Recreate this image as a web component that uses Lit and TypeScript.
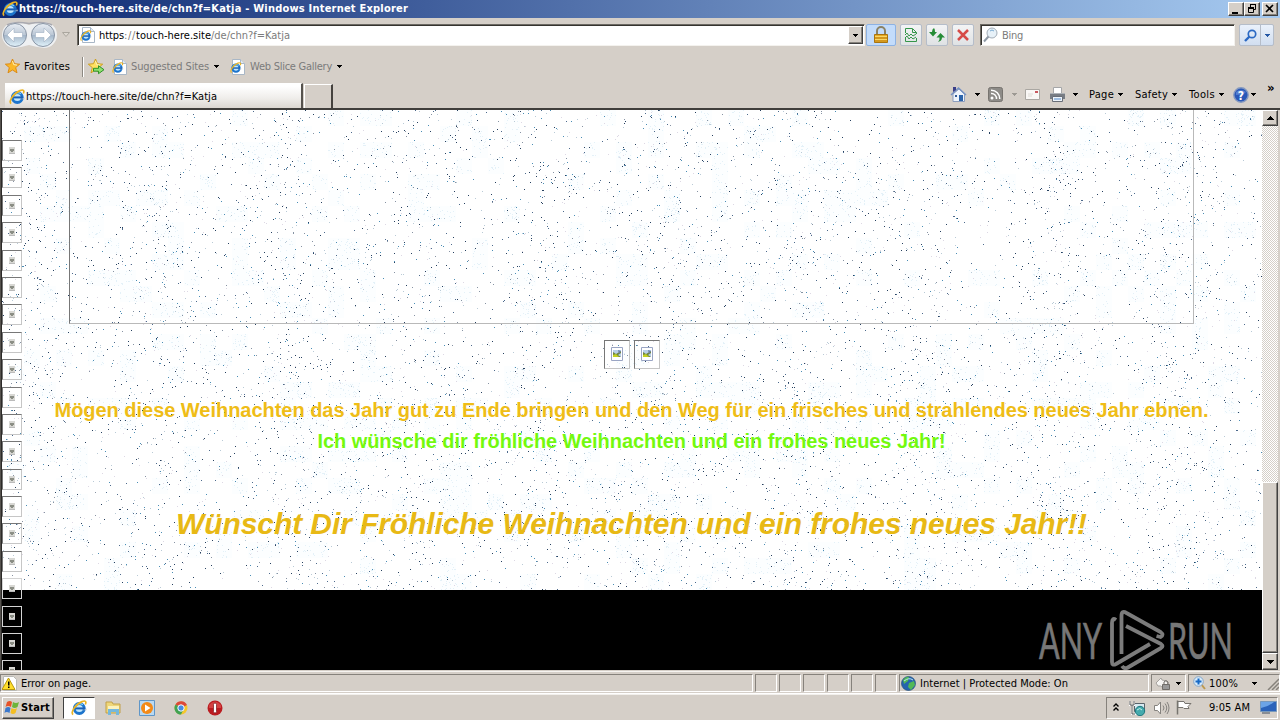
import { LitElement, html, svg, css } from "lit";
import { customElement, property } from "lit/decorators.js";

const caret = html`<svg class="caret" width="5" height="3" viewBox="0 0 5 3"><path d="M0 0h5v1H4v1H3v1H2V2H1V1H0z" fill="currentColor"/></svg>`;

const eShape = svg`
  <circle cx="8.3" cy="8.5" r="5" fill="#bfe6fb" stroke="#1c74cc" stroke-width="2.9"/>
  <path d="M10 10.2h6v-1.6" fill="#d6d2cb" opacity=".6"/>
  <path d="M4.2 8.4h9.6" stroke="#1b5fb4" stroke-width="2"/>
  <path d="M4 6.600C5 3.500 9 2.800 12 4.700" stroke="#7fd0fa" stroke-width="1.300" fill="none"/>
  <path d="M2.2 14.6C-1 13 4 4.6 11 1.6c3.600-1.500 4.600.2 3.300 2.900" fill="none" stroke="#e9b324" stroke-width="1.700"/>`;
const ieIcon = html`<svg width="16" height="16" viewBox="0 0 16 16">${eShape}</svg>`;
const iePage = html`<svg width="15" height="16" viewBox="0 0 15 16">
  <path d="M2.500.5h8l4 4v11h-12z" fill="#fff" stroke="#a9b7c6"/><path d="M10.500.5v4h4" fill="#dfe9f3" stroke="#a9b7c6"/>
  <g transform="translate(0 3) scale(.72)">${eShape}</g></svg>`;
const star = (add: boolean) => html`<svg width="17" height="17" viewBox="0 0 17 17">
  <path d="M7.500 1l2 4.700 5.200.5-4 3.400 1.300 5.200-4.500-2.800L3 14.800l1.300-5.200-4-3.400 5.200-.5z" fill="${add ? "#ffe162" : "#fbb829"}" stroke="${add ? "#c99b16" : "#d9860f"}" stroke-width=".9"/>
  <path d="M7.500 3l1.200 3.600 3.300.5" fill="none" stroke="#fff2b8"/>
  ${add ? svg`<path d="M5.500 10.300h5V7.700l5.500 4-5.500 4v-2.500h-5z" fill="#8fe070" stroke="#218a1e" stroke-width=".9"/>` : ""}</svg>`;
const brokenSmall = html`<svg width="6" height="7" viewBox="0 0 6 7"><path d="M0 0h6v7H0z" fill="#d8d8d4"/><path d="M1 2h4v2H4v1H2V4H1z" fill="#8b8e85"/><path d="M0 6h6v1H0z" fill="#bbb"/></svg>`;
const brokenBig = html`<svg width="12" height="14" viewBox="0 0 12 14"><path d="M.5.5h11v13H.5z" fill="#fff" stroke="#9aa5c4"/><path d="M2 3h8v7H2z" fill="#b8cfe8"/><path d="M2 5l3 2 5-3v2L7 8l3 2H2z" fill="#6f8440"/><path d="M2 8l3-1 3 3H2z" fill="#c3cf20"/><path d="M7 3l3 1-2 3z" fill="#6d7fa5"/></svg>`;

/** One line of interface text, tracked out to a given width. */
@customElement("ui-text")
export class UiText extends LitElement {
  static styles = css`:host{display:block;white-space:pre;line-height:1.2} span{display:inline-block}`;
  @property({ type: Number }) fit = 0;
  @property() text = "";
  render() { return html`<span>${this.text}</span>`; }
  updated() {
    const s = this.renderRoot.querySelector("span")!;
    s.style.letterSpacing = "0px";
    const w = s.getBoundingClientRect().width;
    if (this.fit && w) s.style.letterSpacing = `${(this.fit - w) / this.text.length}px`;
  }
}
const t = (text: string, fit: number, cls = "") => html`<ui-text class=${cls} .text=${text} .fit=${fit}></ui-text>`;

/** Falling snow specks over the page background. */
@customElement("snow-field")
export class SnowField extends LitElement {
  static styles = css`:host{display:block} svg{display:block}`;
  render() {
    let seed = 90211;
    const rnd = () => ((seed = (seed * 1664525 + 1013904223) >>> 0) / 4294967296);
    const inks = ["#26405f", "#4d6a8c", "#8793a3", "#4a8db5", "#b9cad6", "#ddd8e4"];
    const share = [0.2, 0.38, 0.52, 0.66, 0.84, 1];
    const paths = inks.map(() => "");
    for (let i = 0; i < 17500; i++) {
      const x = Math.floor(rnd() * 1260), y = Math.floor(rnd() * 480), r = rnd();
      const keep = 0.54 + 0.18 * Math.sin(x / 20.2) + 0.1 * Math.sin(y / 13 + x / 39);
      if (rnd() > keep) continue;
      paths[share.findIndex((v) => r <= v)] += `M${x} ${y}h1v1h-1z`;
    }
    let haze = "", mist = "";
    for (let i = 0; i < 620; i++) {
      const bx = Math.floor(rnd() * 78) * 16 + 6, by = Math.floor(rnd() * 30) * 16;
      haze += `M${bx} ${by}h16v16h-16z`;
      for (let k = 0; k < 12; k++) mist += `M${bx + Math.floor(rnd() * 16)} ${by + Math.floor(rnd() * 16)}h1v1h-1z`;
    }
    return html`<svg width="1260" height="480" shape-rendering="crispEdges"><path d=${haze} fill="#fcfeff"/><path d=${mist} fill="#e4f1f8"/>${paths.map((d, i) => svg`<path d=${d} fill=${inks[i]}/>`)}</svg>`;
  }
}

@customElement("app-root")
export class AppRoot extends LitElement {
  static styles = css`
    :host{display:block;width:1280px;height:720px;overflow:hidden;background:#d5cfc8;color:#000;font:11px "DejaVu Sans Condensed","DejaVu Sans",sans-serif}
    *{box-sizing:border-box}
    svg{display:block;flex:none}
    .win{display:grid;grid-template-rows:18px 35px 27px 28px 562px 24px 26px;height:720px}
    .title{display:flex;align-items:center;padding:0 2px 0 2px;background:linear-gradient(90deg,#0d2872,#a6caf0);color:#fff;font-weight:bold}
    .title ui-text{margin-left:1px;flex:1}
    .wb{width:16px;height:14px;background:#d5cfc8;border:1px solid;border-color:#fff #404040 #404040 #fff;box-shadow:inset -1px -1px #86827c}
    .wb.close{margin-left:2px}
    .nav{display:grid;grid-template-columns:60px 15px 789px 34px 26px 26px 28px 259px 35px;align-items:center;padding:0 0 1px 2px}
    .field{display:flex;align-items:center;background:#fff;height:22px;border:1px solid;border-color:#6c6963 #f4f2ee #f4f2ee #6c6963;box-shadow:inset 1px 1px #36342f;padding:0 1px 0 2px}
    .field ui-text{padding-top:1px}
    .addr{width:788px}.addr .url{display:flex;flex:1;margin-left:4px}
    .grey{color:#7b7b7b}
    .dd{width:15px;height:18px;background:#d5cfc8;border:1px solid;border-color:#fff #404040 #404040 #fff;box-shadow:inset -1px -1px #86827c;display:grid;place-items:center}
    .search{width:255px}.search ui-text{margin-left:4px}
    .btn{width:22px;height:22px;border:1px solid #b5bdc9;border-radius:2px;background:linear-gradient(#f3f4f5,#dfe2e4);display:grid;place-items:center}
    .btn.lock{width:30px;background:#c3dcfb;border-color:#8db2e3}
    .btn.go{width:35px;grid-template-columns:20px 13px;background:linear-gradient(#eaf1fb,#d1def0)}
    .btn.go .caret{color:#2457a5}
    .btn.go .half{border-left:1px solid #b5bdc9;height:20px;width:13px;display:grid;place-items:center}
    .favs{display:grid;grid-template-columns:19px 58px 6px 24px 19px 83px 16px 20px 87px 10px;align-items:center;padding-left:5px}
    .sep{width:2px;height:20px;background:#8c8881;border-right:1px solid #fff}
    .tabs{display:grid;grid-template-columns:298px 30px 1fr;padding:3px 0 0 5px}
    .tab{display:flex;align-items:center;gap:1px;padding:1px 0 0 4px;background:linear-gradient(#fff 10%,#efedea 60%,#dcd7d1);border-right:2px solid #55524d;border-top:1px solid #fff}
    .newtab{margin:1px 0 0 1px;border:1px solid #fff;border-right:2px solid #45423e;border-bottom:0}
    .cmds{display:grid;grid-template-columns:25px 13px 24px 13px 24px 24px 16px 29px 17px 37px 17px 30px 14px 18px 16px 13px;justify-content:end;align-items:center;height:22px;padding-top:1px}
    .dim{color:#9c9993}
    .more{font-size:13px;line-height:8px;font-weight:bold;align-self:start}
    .view{display:grid;grid-template-columns:1260px 16px;padding-left:2px;background:linear-gradient(90deg,#55524e 1px,#2c2a28 1px,#2c2a28 2px,#d5cfc8 2px);border-top:2px solid #403e3b;height:562px}
    .page{position:relative;height:560px;background:#000;overflow:hidden;font-family:"Liberation Sans",Arial,sans-serif;font-weight:bold}
    .snow{position:absolute;left:0;top:0;background:#fff}
    .body{position:relative;height:480px;display:flex;flex-direction:column;align-items:center;padding-right:1px}
    .frame{width:1125px;height:214px;border:solid #b9b9b9;border-width:0 1px 1px;border-left-color:#777;flex:none}
    .pics{display:flex;gap:4px;margin:16px 0 0 1px}
    .pic{width:26px;height:29px;border:1px solid;border-color:#777 #c5c5c5 #c5c5c5 #777;display:grid;place-items:center;padding-bottom:1px}
    .wish{font-size:20px;line-height:24px;color:#efbd17;height:24px}
    .w1{margin-top:29px}.w2{margin-top:7px;color:#73f90f}.w3{margin-top:53px;font-size:30px;line-height:36px;font-style:italic;color:#e8b915}
    .trail{position:absolute;left:0;top:30px;display:grid;grid-auto-rows:27.400px}
    .flake{width:20px;height:21px;border:1px solid;border-color:#777 #c6c6c6 #c6c6c6 #777;display:grid;place-items:center}
    .flake.dark{border-color:#d4d4d4}
    .mark{position:absolute;left:1030px;top:498px}
    .bar{display:grid;grid-template-rows:16px 356px 171px 17px;background:repeating-conic-gradient(#fff 0 25%,#d5cfc8 0 50%) 0 0/2px 2px}
    .sb{background:#d5cfc8;border:1px solid;border-color:#fff #404040 #404040 #fff;box-shadow:inset -1px -1px #86827c;display:grid;place-items:center}
    .status{display:grid;grid-template-columns:753px repeat(6,22px) 250px 35px 92px;column-gap:2px;padding-top:3px;border-top:1px solid #d5cfc8;border-bottom:1px solid #fff;box-shadow:inset 0 1px #f6f4f1}
    .pane{height:18px;border:1px solid;border-color:#86827c #fff #fff #86827c;display:flex;align-items:center}
    .pane ui-text{padding-top:1px}
    .pane.first{padding-left:1px;gap:4px}
    .pane.zone{gap:4px;padding-left:1px}
    .pane.prot{padding-left:3px;gap:5px}
    .pane.zoom{padding-left:4px;gap:3px}.zoom .caret{margin-left:11px}.zoom .grip{margin-left:auto}
    .task{display:grid;grid-template-columns:61px 42px 34px 34px 34px 899px 172px;padding-left:2px;align-items:center;border-top:1px solid #f2f0ec}
    .start{width:52px;height:22px;display:flex;align-items:center;gap:1px;padding-left:1px;font-weight:bold;background:#d5cfc8;border:1px solid;border-color:#fff #404040 #404040 #fff;box-shadow:inset -1px -1px #86827c}
    .on{width:32px;height:22px;background:#fff;border:1px solid;border-color:#404040 #fff #fff #404040;display:grid;place-items:center}
    .tray{height:22px;border:1px solid;border-color:#86827c #fff #fff #86827c;display:grid;grid-template-columns:16px 24px 23px 33px 51px 18px;align-items:center;padding-left:6px}
  `;

  render() {
    return html`<div class="win">
      <div class="title">${ieIcon}${t("https://touch-here.site/de/chn?f=Katja - Windows Internet Explorer", 389)}
        <div class="wb"><svg width="14" height="12"><path d="M3 9h6v2H3z"/></svg></div>
        <div class="wb"><svg width="14" height="12" fill="none" stroke="#000"><path d="M5 1.500h6M5.500 1v3M10.500 1v5.500H8M3 4.500h6M3 5.500h6M3.500 5v4.500h5V5"/></svg></div>
        <div class="wb close"><svg width="14" height="12" stroke="#000" stroke-width="1.600"><path d="M3 2l7 7M10 2L3 9"/></svg></div>
      </div>
      <div class="nav">
        <svg width="56" height="28" viewBox="0 0 56 28">
          <defs><linearGradient id="orb" x2="0" y2="1"><stop stop-color="#e9eef4"/><stop offset=".48" stop-color="#bcc8d6"/><stop offset=".52" stop-color="#a5b7ca"/><stop offset="1" stop-color="#e2f3fb"/></linearGradient></defs>
          <path d="M13 1Q20 1 27 4 34 1 42 1a13 13 0 0 1 0 26Q34 26 27 24 20 26 13 27A13 13 0 0 1 13 1z" fill="#eef0f2"/>
          <path d="M5 4Q12 0 27 2.500 43 0 50 4" stroke="#a9a9b0" stroke-width="1.500" fill="none"/>
          <circle cx="13" cy="14" r="11.500" fill="url(#orb)" stroke="#8995a5"/><circle cx="41" cy="14" r="11.500" fill="url(#orb)" stroke="#8995a5"/>
          <path d="M5 14L12 7v4.500h8.500v5H12V21zM49 14L42 7v4.500h-8.500v5H42V21z" fill="#fff" stroke="#9fb0c2" stroke-width=".6"/>
        </svg>
        <svg width="8" height="6"><path d="M.5.5h7L4 4.500z" fill="#ddd8d1" stroke="#aaa69e"/></svg>
        <div class="field addr">${iePage}<div class="url">${t("https", 25)}${t("://", 12, "grey")}${t("touch-here.site", 75)}${t("/de/chn?f=Katja", 79, "grey")}</div><div class="dd">${caret}</div></div>
        <div class="btn lock"><svg width="16" height="18"><path d="M4 8V5a4 4 0 0 1 8 0v3" fill="none" stroke="#8b8265" stroke-width="2"/><path d="M1.500 8.500h13v8h-13z" fill="#e9ac25" stroke="#a97410"/><path d="M2 10.500h12M2 13.500h12" stroke="#f9d767"/><path d="M2 12h12M2 15h12" stroke="#bd851a"/></svg></div>
        <div class="btn"><svg width="14" height="16" fill="none" stroke="#35964a"><path d="M1.500 6V1.500h7l4 4V7M8.500 2v3.500h4M1.500 10v4.500h11V11"/><path d="M1 8l2-2 2 3 2-2 2 2 3-2M1 11l2-2 2 3 2-2 2 2 3-2"/></svg></div>
        <div class="btn"><svg width="16" height="14" fill="#268c36"><path d="M5 0Q3 1 3 4H0l4 4.500L8 4H6q0-3-1-4zM11.500 5l4.500 4.500h-3q0 3.500-4 4.500 2-2 1.500-4.500H7.500z"/></svg></div>
        <div class="btn"><svg width="12" height="12" stroke="#d64b47" stroke-width="2.500"><path d="M1 1l10 10M11 1L1 11"/></svg></div>
        <div class="field search"><svg width="15" height="16" fill="none"><circle cx="9" cy="6" r="5" fill="#e7f1f8" stroke="#a3adb7"/><path d="M5.500 9.500L1 14.500" stroke="#8f9aa6" stroke-width="2"/><path d="M7 4q2-2 4 0" stroke="#77aad2"/></svg>${t("Bing", 21, "grey")}</div>
        <div class="btn go"><svg width="13" height="13" fill="none" stroke="#2b69c3"><circle cx="8" cy="5" r="3.700" stroke-width="1.700"/><path d="M5.500 7.500L1 12" stroke-width="2.400"/></svg><div class="half">${caret}</div></div>
      </div>
      <div class="favs">${star(false)}${t("Favorites", 46)}<div class="sep"></div>${star(true)}${iePage}${t("Suggested Sites", 78, "grey")}${caret}${iePage}${t("Web Slice Gallery", 82, "grey")}${caret}</div>
      <div class="tabs">
        <div class="tab">${ieIcon}${t("https://touch-here.site/de/chn?f=Katja", 191)}</div><div class="newtab"></div>
        <div class="cmds">
          <svg width="17" height="17"><path d="M3 8v7.500h11.500V8L9 3z" fill="#eef4fc" stroke="#8b9dbd"/><path d="M1 9l7.500-7L16 9" fill="none" stroke="#7793c3" stroke-width="1.500"/><path d="M3 1h3v3L3 6z" fill="#3b3f88"/><path d="M9 9h4v6H9z" fill="#2c64ab"/><path d="M5 9h2v2H5z" fill="#325b96"/></svg>${caret}
          <svg width="15" height="15"><rect x=".5" y=".5" width="14" height="14" rx="2" fill="#8d8b87" stroke="#77746f"/><circle cx="4" cy="11" r="1.500" fill="#fff"/><path d="M3 6.500a5 5 0 0 1 5.500 5.500M3 3.200a8.500 8.500 0 0 1 8.800 8.800" fill="none" stroke="#fff" stroke-width="1.500"/></svg><span class="dim">${caret}</span>
          <svg width="15" height="11"><path d="M.5.500h14v10H.5z" fill="#f9f7f5" stroke="#aaa7a2"/><path d="M10 2h3v2h-3z" fill="#c9575d"/><path d="M3 5h5M3 7h4" stroke="#dedbd6"/></svg>
          <svg width="17" height="16"><path d="M4.500 6V.5h8V6" fill="#fff" stroke="#a5a6a8"/><path d="M1 6h15v6H1z" fill="#777c83"/><path d="M1 6h15v1H1z" fill="#aeb2b7"/><path d="M3.500 9.500h10v5h-10z" fill="#edf3f9" stroke="#686e78"/><path d="M5 12h7" stroke="#558ccd"/></svg>${caret}
          ${t("Page", 25)}${caret}${t("Safety", 33)}${caret}${t("Tools", 26)}${caret}
          <svg width="16" height="16"><circle cx="8" cy="8" r="7.200" fill="#2958b8" stroke="#8599bf" stroke-width="1.400"/><path d="M3 5q5-4 10 0-2 3-10 3z" fill="#6f98df" opacity=".6"/><text x="8" y="12.500" text-anchor="middle" fill="#fff" font-size="12" font-weight="bold">?</text></svg>${caret}<div class="more">»</div>
        </div>
      </div>
      <div class="view">
        <div class="page">
          <snow-field class="snow"></snow-field>
          <div class="body">
            <div class="frame"></div>
            <div class="pics"><div class="pic">${brokenBig}</div><div class="pic">${brokenBig}</div></div>
            ${t("Mögen diese Weihnachten das Jahr gut zu Ende bringen und den Weg für ein frisches und strahlendes neues Jahr ebnen.", 1154, "wish w1")}
            ${t("Ich wünsche dir fröhliche Weihnachten und ein frohes neues Jahr!", 628, "wish w2")}
            ${t("Wünscht Dir Fröhliche Weihnachten und ein frohes neues Jahr!!", 911, "wish w3")}
          </div>
          <div class="trail">${Array.from({ length: 20 }, (_, i) => html`<div class="flake ${i > 15 ? "dark" : ""}">${brokenSmall}</div>`)}</div>
          <svg class="mark" width="215" height="62" fill="#777">
            <g font-family="Lato, Liberation Sans, sans-serif" font-weight="400" font-size="51" stroke="#777" stroke-width=".7"><text x="7" y="51" textLength="63" lengthAdjust="spacingAndGlyphs">ANY</text><text x="136" y="51" textLength="65" lengthAdjust="spacingAndGlyphs">RUN</text></g>
            <g fill="none" stroke="#7c7c7c" stroke-width="3.800" stroke-linejoin="round" transform="translate(-2 0)"><path d="M86 12q-4-3-4 3v39q0 4 4 2l34-20"/><path d="M91.500 46V8q0-6 5-3l34 19q4 3 0 5l-4-1"/><path d="M96 18l35 18q3 2 0 4L97 60q-3 1-5-2"/></g>
          </svg>
        </div>
        <div class="bar"><div class="sb"><svg width="7" height="4"><path d="M3 0h1v1h1v1h1v1h1v1H0V3h1V2h1V1h1z"/></svg></div><div></div><div class="sb"></div><div class="sb"><svg width="7" height="4"><path d="M0 0h7v1H6v1H5v1H4v1H3V3H2V2H1V1H0z"/></svg></div></div>
      </div>
      <div class="status">
        <div class="pane first"><svg width="15" height="15"><path d="M1.500.5h10l3 3v11h-13z" fill="#fff" stroke="#b9b9b5"/><path d="M6.500 2l6.500 11.500H0z" fill="#ffdf2c" stroke="#b99709"/><path d="M6 5.500h1.500v4H6zM6 10.500h1.500V12H6z"/></svg>${t("Error on page.", 70)}</div>
        ${Array.from({ length: 6 }, () => html`<div class="pane"></div>`)}
        <div class="pane zone"><svg width="15" height="15"><circle cx="7.500" cy="7.500" r="7" fill="#2564ae" stroke="#264f78" stroke-width=".7"/><path d="M2 4q3-4 6-3l-1 4-4 3zM8 7l5-2 1 4-4 5-3-3z" fill="#51b857"/><path d="M3 5q5-4 9-1" stroke="#bde7f7" fill="none"/></svg>${t("Internet | Protected Mode: On", 148)}</div>
        <div class="pane prot"><svg width="16" height="14"><path d="M1 7l5-5 1 2q4 0 6 3l-5 5q-2-3-5-2z" fill="#f5f4f2" stroke="#a5a29e"/><path d="M7.500 8.500h7v5h-7z" fill="#999" stroke="#706d69"/><path d="M9 8V6q2-3 4 0v2" fill="none" stroke="#706d69"/></svg>${caret}</div>
        <div class="pane zoom"><svg width="13" height="14"><path d="M8 8l4 5" stroke="#bd9950" stroke-width="2"/><circle cx="5.500" cy="5.500" r="4.800" fill="#d6eafa" stroke="#86a6c7"/><path d="M5.500 2.500v6M2.500 5.500h6" stroke="#1769c5" stroke-width="2"/></svg>${t("100%", 29)}${caret}<svg class="grip" width="12" height="13" stroke="#86827c" stroke-width="1.500"><path d="M1 13L12 2M5 13l7-7M9 13l3-3"/></svg></div>
      </div>
      <div class="task">
        <div class="start"><svg width="16" height="15"><path d="M3 2q3-2 5 0L7 7Q4 5 1.500 7z" fill="#e65228"/><path d="M9 2q3 2 6 0l-1.500 5q-3 2-5.500 0z" fill="#6db43b"/><path d="M1.500 8q3-2 5 0l-1 5q-3-2-5 0z" fill="#3b78cc"/><path d="M7.500 8q3 2 5.500 0l-1.500 5q-2.500 2-5 0z" fill="#f4be22"/></svg>${t("Start", 29)}</div>
        <div class="on">${ieIcon}</div>
        <svg width="17" height="16"><path d="M1 2h6l1 2h7v9H1z" fill="#eed679" stroke="#c1a04a"/><path d="M3 6h11v4H3z" fill="#fbf2be"/><path d="M3 15V9h11v6h-3v-3H6v3z" fill="#75b8dc"/></svg>
        <svg width="16" height="16"><path d="M.5.500h15v15H.5z" fill="#b9d9f2" stroke="#5f96c8"/><circle cx="8" cy="8" r="6" fill="#f38a18"/><path d="M6 4.500v7L11.500 8z" fill="#fff"/></svg>
        <svg width="16" height="16"><circle cx="8" cy="8" r="6.500" fill="#f4c72c"/><path d="M8 8L2.500 4.500A6.500 6.500 0 0 1 14 5z" fill="#dc4939"/><path d="M8 8L2.500 4.500A6.500 6.500 0 0 0 8 14.500l2-4z" fill="#42a252"/><circle cx="8" cy="8" r="3.200" fill="#478ce2" stroke="#fff"/></svg>
        <svg width="16" height="16"><circle cx="8" cy="8" r="7.500" fill="#bb1c20"/><path d="M2 5q6-7 12 0v3H2z" fill="#e25b58" opacity=".6"/><rect x="6.500" y="3" width="3" height="10" rx="1.500" fill="#fff" stroke="#79151a" stroke-width=".7"/></svg>
        <div class="tray">
          <svg width="6" height="9" fill="none" stroke="#000" stroke-width="1.400"><path d="M.5 3.500L3 1l2.500 2.500M.5 7.500L3 5l2.500 2.500"/></svg>
          <svg width="17" height="16"><path d="M5.500 3.500h10v8h-10z" fill="#d8eaf1" stroke="#59636b"/><path d="M1 1v4h4V1M3 5v9h5" fill="none" stroke="#fff" stroke-width="2"/><path d="M1 1v4h4V1M3 5v9h3" fill="none" stroke="#555"/><circle cx="11" cy="11" r="4.700" fill="#45aaad" stroke="#1e777e"/><path d="M8 10q3-3 5 0" stroke="#c6f2ec" fill="none"/></svg>
          <svg width="17" height="14" fill="none" stroke="#85827e"><path d="M1.500 4.500h3l3-3.500v12l-3-3.500h-3z" fill="#fff"/><path d="M10 4.500q2 2.500 0 5M12 2.500q3.500 4.500 0 9M14 1q4 6 0 12"/></svg>
          <svg width="17" height="15" fill="#fff" stroke="#77746f"><path d="M1.500.5v14" stroke-width="1.500"/><path d="M2 1.500h6l1 2h6l-3 3 1 2H8l-1-1H2z"/></svg>
          ${t("9:05 AM", 41)}
          <svg width="17" height="13"><path d="M.5.5h16v10H.5z" fill="#2b63ba" stroke="#7899bb"/><path d="M1 7q7-1 13-6H1z" fill="#6ca4e6"/><path d="M2 12h8" stroke="#3e4c61"/></svg>
        </div>
      </div>
    </div>`;
  }
}
